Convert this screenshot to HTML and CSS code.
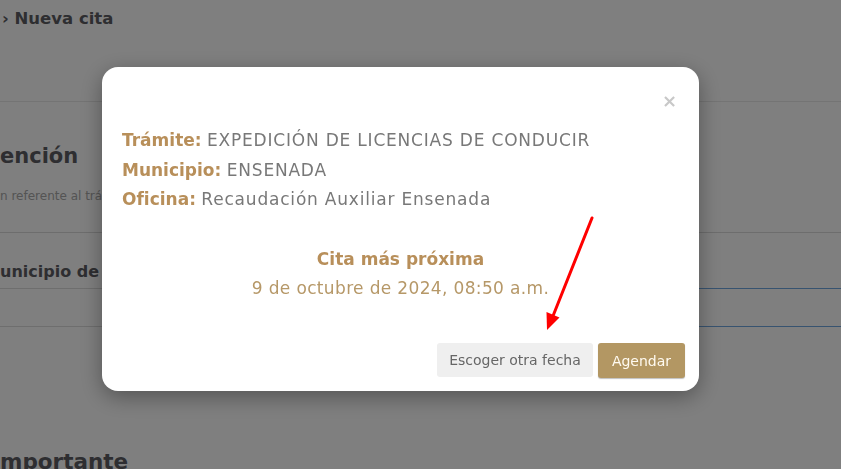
FILE: index.html
```html
<!DOCTYPE html>
<html lang="es">
<head>
    <meta charset="UTF-8">
    <meta name="viewport" content="width=device-width, initial-scale=1.0">
    <title>Nueva cita</title>
    <link rel="stylesheet" href="styles.css">
</head>
<body>
    <div class="page">
        <div class="breadcrumb">› Nueva cita</div>

        <div class="section">
            <h2 class="section-title">ención</h2>
            <p class="section-text">n referente al trámite</p>
        </div>

        <div class="field">
            <label class="field-label">unicipio de atención</label>
            <div class="field-input"></div>
        </div>

        <h2 class="section-title important">mportante</h2>
    </div>

    <div class="backdrop"></div>

    <div class="modal">
        <div class="modal-header">
            <button class="modal-close">×</button>
        </div>

        <div class="modal-info">
            <div><span class="info-label">Trámite:</span> <span class="info-value">EXPEDICIÓN DE LICENCIAS DE CONDUCIR</span></div>
            <div><span class="info-label">Municipio:</span> <span class="info-value">ENSENADA</span></div>
            <div><span class="info-label">Oficina:</span> <span class="info-value">Recaudación Auxiliar Ensenada</span></div>
        </div>

        <div class="modal-next">
            <div class="next-title">Cita más próxima</div>
            <div class="next-date">9 de octubre de 2024, 08:50 a.m.</div>
        </div>

        <div class="modal-footer">
            <button class="btn btn-light">Escoger otra fecha</button>
            <button class="btn btn-gold">Agendar</button>
        </div>
    </div>

    <!-- annotation arrow -->
    <svg class="arrow" width="841" height="469" viewBox="0 0 841 469">
        <line x1="592" y1="218" x2="553" y2="316" stroke="#ff0000" stroke-width="3" stroke-linecap="round"/>
        <polygon points="547,330 546.5,312 559.5,317.5" fill="#ff0000"/>
    </svg>
</body>
</html>
```

FILE: styles.css
```css
:root {
    --gold: #b88f5a;
    --gold-soft: #b69868;
    --gold-btn: #b39763;
    --text-gray: #787878;
}

body {
    font-family: 'DejaVu Sans', 'Open Sans', sans-serif;
    background-color: #ffffff;
    margin: 0;
    padding: 0;
    overflow: hidden;
    height: 469px;
}

/* Page behind the modal */
.page {
    color: #5c5c62;
}

.breadcrumb {
    font-size: 16.5px;
    font-weight: 700;
    padding: 9px 0 0 2px;
    height: 102px;
    box-sizing: border-box;
    border-bottom: 1px solid #e8e8e8;
}

.section {
    border-bottom: 1px solid #dadada;
    height: 131px;
    box-sizing: border-box;
    padding-top: 38px;
}

.section-title {
    margin: 0;
    font-size: 21px;
    font-weight: 600;
    line-height: 32px;
}

.section-text {
    margin: 17px 0 0;
    font-size: 12px;
    color: #a8a8a8;
    white-space: nowrap;
    width: 102px;
    overflow: hidden;
}

.field {
    padding-top: 27px;
}

.field-label {
    display: block;
    font-size: 16px;
    font-weight: 700;
    line-height: 24px;
    white-space: nowrap;
    width: 102px;
    overflow: hidden;
}

.field-input {
    margin-top: 4px;
    height: 37px;
    border-top: 1px solid;
    border-bottom: 1px solid;
    border-image: linear-gradient(to right, #dcdcdc 0, #dcdcdc 30%, #6fa6e0 85%) 1;
}

.important {
    margin-top: 119px;
    font-size: 21.5px;
}

.backdrop {
    position: fixed;
    inset: 0;
    background-color: rgba(0, 0, 0, 0.5);
}

/* Modal */
.modal {
    position: fixed;
    left: 102px;
    top: 67px;
    width: 597px;
    height: 324px;
    box-sizing: border-box;
    background-color: #ffffff;
    border-radius: 16px;
    box-shadow: 0 6px 22px rgba(0, 0, 0, 0.35);
    padding: 20px 14px 13px 20px;
    display: flex;
    flex-direction: column;
}

.modal-header {
    display: flex;
    justify-content: flex-end;
    height: 39px;
}

.modal-close {
    border: none;
    background: none;
    font-family: inherit;
    font-size: 18px;
    font-weight: 700;
    line-height: 1;
    color: #c8c8c8;
    padding: 0;
    margin: 3px 8px 0 0;
    height: 22px;
    cursor: pointer;
}

.modal-info {
    font-size: 17px;
    line-height: 29.5px;
}

.info-label {
    color: var(--gold);
    font-weight: 700;
}

.info-value {
    color: var(--text-gray);
    letter-spacing: 0.8px;
}

.modal-next {
    margin-top: 30px;
    text-align: center;
    font-size: 17px;
    line-height: 29.5px;
    padding-right: 6px;
}

.next-title {
    color: var(--gold);
    font-weight: 700;
}

.next-date {
    color: var(--gold-soft);
    letter-spacing: 0.35px;
}

.modal-footer {
    margin-top: auto;
    display: flex;
    justify-content: flex-end;
    gap: 5px;
}

.btn {
    font-family: inherit;
    font-size: 14px;
    border: none;
    border-radius: 3px;
    height: 34px;
    padding: 0 10px;
    cursor: pointer;
}

.btn-light {
    background-color: #efefef;
    color: #666666;
    width: 156px;
}

.btn-gold {
    background-color: var(--gold-btn);
    color: #fffaf0;
    width: 87px;
    height: 35px;
    box-shadow: 0 1px 1px rgba(0, 0, 0, 0.25);
}

.arrow {
    position: fixed;
    left: 0;
    top: 0;
    pointer-events: none;
}
```
